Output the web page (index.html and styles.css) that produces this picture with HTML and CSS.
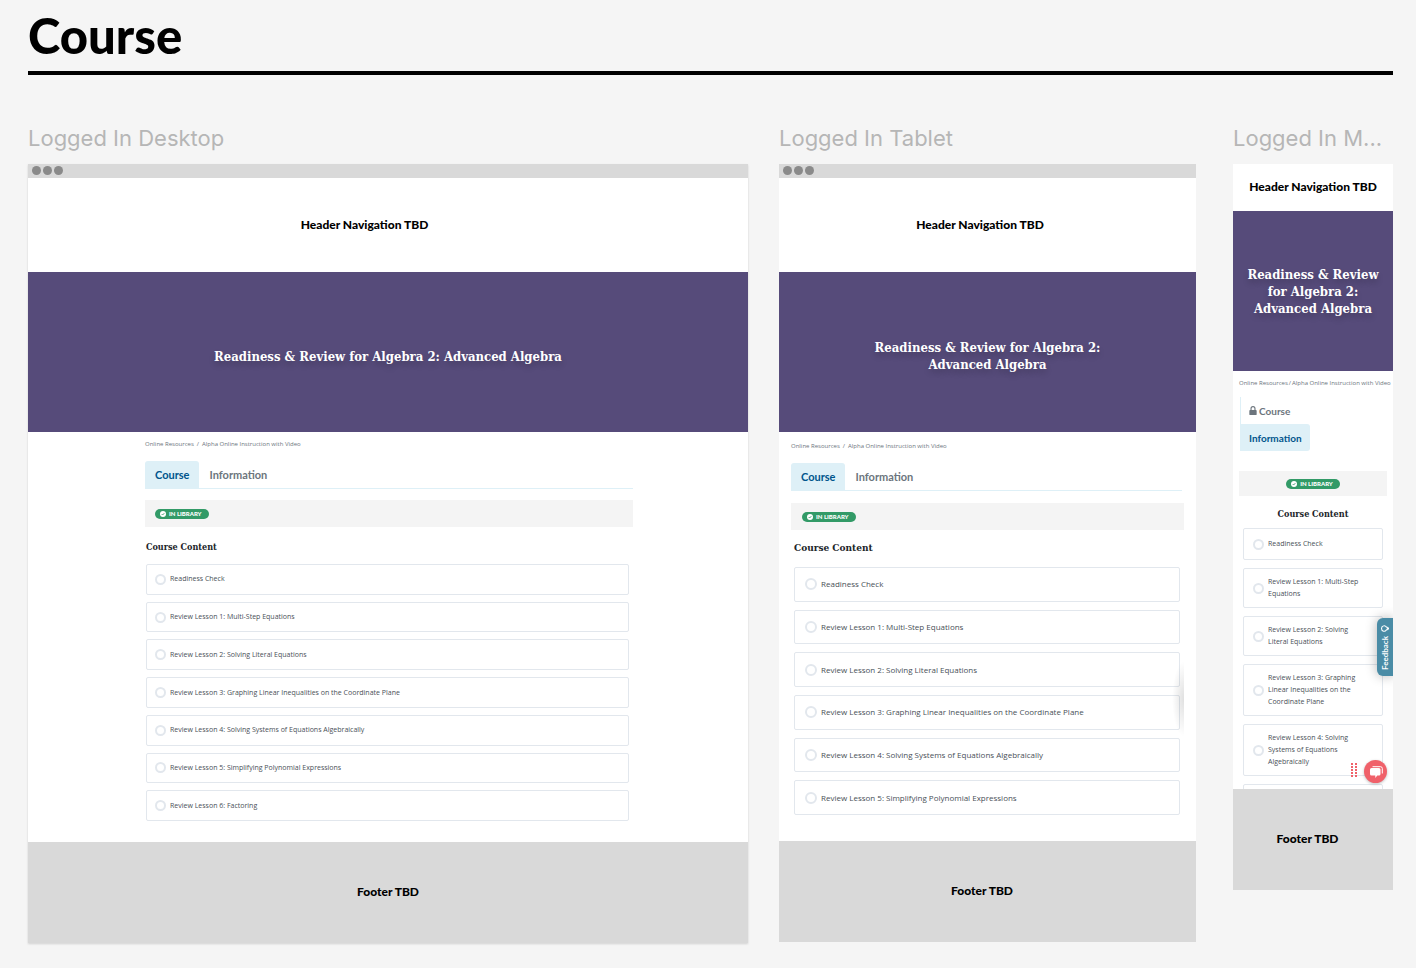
FILE: index.html
```html
<!DOCTYPE html>
<html lang="en">
  <head>
    <meta charset="UTF-8" />
    <meta name="viewport" content="width=device-width, initial-scale=1.0" />
    <title>Course</title>
    <link rel="stylesheet" href="styles.css">
  </head>
  <body>
    <svg width="0" height="0" class="defs" aria-hidden="true">
      <symbol id="check" viewBox="0 0 16 16">
        <circle cx="8" cy="8" r="8" fill="#fff" />
        <path d="M4.5 8.2l2.5 2.5 4.6-5" fill="none" stroke="#329a67" stroke-width="2.2" />
      </symbol>
    </svg>

    <h1>Course</h1>

    <main class="boards">
      <!-- Desktop -->
      <section class="board desktop">
        <h2 class="label">Logged In Desktop</h2>
        <div class="frame">
          <div class="chrome"><span></span><span></span><span></span></div>
          <header class="site-header">Header Navigation TBD</header>
          <div class="hero"><h3>Readiness &amp; Review for Algebra 2: Advanced Algebra</h3></div>
          <div class="content">
            <nav class="breadcrumb"><a href="#">Online Resources</a><span>/</span><a href="#">Alpha Online Instruction with Video</a></nav>
            <div class="tabs">
              <button type="button" class="tab active">Course</button>
              <button type="button" class="tab">Information</button>
            </div>
            <div class="status"><span class="badge"><svg><use href="#check" /></svg>IN LIBRARY</span></div>
            <h4>Course Content</h4>
            <ul class="lessons">
              <li><a href="#"><i></i>Readiness Check</a></li>
              <li><a href="#"><i></i>Review Lesson 1: Multi-Step Equations</a></li>
              <li><a href="#"><i></i>Review Lesson 2: Solving Literal Equations</a></li>
              <li><a href="#"><i></i>Review Lesson 3: Graphing Linear Inequalities on the Coordinate Plane</a></li>
              <li><a href="#"><i></i>Review Lesson 4: Solving Systems of Equations Algebraically</a></li>
              <li><a href="#"><i></i>Review Lesson 5: Simplifying Polynomial Expressions</a></li>
              <li><a href="#"><i></i>Review Lesson 6: Factoring</a></li>
            </ul>
          </div>
          <footer class="site-footer">Footer TBD</footer>
        </div>
      </section>

      <!-- Tablet -->
      <section class="board tablet">
        <h2 class="label">Logged In Tablet</h2>
        <div class="frame">
          <div class="chrome"><span></span><span></span><span></span></div>
          <header class="site-header">Header Navigation TBD</header>
          <div class="hero"><h3>Readiness &amp; Review for Algebra 2:<br />Advanced Algebra</h3></div>
          <div class="content">
            <nav class="breadcrumb"><a href="#">Online Resources</a><span>/</span><a href="#">Alpha Online Instruction with Video</a></nav>
            <div class="tabs">
              <button type="button" class="tab active">Course</button>
              <button type="button" class="tab">Information</button>
            </div>
            <div class="status"><span class="badge"><svg><use href="#check" /></svg>IN LIBRARY</span></div>
            <h4>Course Content</h4>
            <ul class="lessons">
              <li><a href="#"><i></i>Readiness Check</a></li>
              <li><a href="#"><i></i>Review Lesson 1: Multi-Step Equations</a></li>
              <li><a href="#"><i></i>Review Lesson 2: Solving Literal Equations</a></li>
              <li><a href="#"><i></i>Review Lesson 3: Graphing Linear Inequalities on the Coordinate Plane</a></li>
              <li><a href="#"><i></i>Review Lesson 4: Solving Systems of Equations Algebraically</a></li>
              <li><a href="#"><i></i>Review Lesson 5: Simplifying Polynomial Expressions</a></li>
            </ul>
            <div class="edge-shadow"></div>
          </div>
          <footer class="site-footer">Footer TBD</footer>
        </div>
      </section>

      <!-- Mobile -->
      <section class="board mobile">
        <h2 class="label">Logged In M...</h2>
        <div class="frame">
          <header class="site-header">Header Navigation TBD</header>
          <div class="hero"><h3>Readiness &amp; Review<br />for Algebra 2:<br />Advanced Algebra</h3></div>
          <div class="content">
            <nav class="breadcrumb"><a href="#">Online Resources</a><span>/</span><a href="#">Alpha Online Instruction with Video</a></nav>
            <div class="tabs">
              <button type="button" class="tab">
                <svg viewBox="0 0 14 16"><path d="M2 7h10a1.500 1.500 0 0 1 1.500 1.500v6A1.500 1.500 0 0 1 12 16H2a1.500 1.500 0 0 1-1.500-1.500v-6A1.500 1.500 0 0 1 2 7z" fill="#6c757d" /><path d="M3.500 8V4.500a3.500 3.500 0 0 1 7 0V8" fill="none" stroke="#6c757d" stroke-width="2" /></svg>Course
              </button>
              <button type="button" class="tab active">Information</button>
            </div>
            <div class="status"><span class="badge"><svg><use href="#check" /></svg>IN LIBRARY</span></div>
            <h4>Course Content</h4>
            <ul class="lessons">
              <li><a href="#"><i></i><span>Readiness Check</span></a></li>
              <li><a href="#"><i></i><span>Review Lesson 1: Multi-Step<br />Equations</span></a></li>
              <li><a href="#"><i></i><span>Review Lesson 2: Solving<br />Literal Equations</span></a></li>
              <li><a href="#"><i></i><span>Review Lesson 3: Graphing<br />Linear Inequalities on the<br />Coordinate Plane</span></a></li>
              <li><a href="#"><i></i><span>Review Lesson 4: Solving<br />Systems of Equations<br />Algebraically</span></a></li>
              <li class="cut"></li>
            </ul>
            <button type="button" class="feedback">
              Feedback
              <svg viewBox="0 0 10 10" fill="none" stroke="#fff" stroke-width="1.200"><path d="M7 3.300L8.200 3.800V6.200L7 6.700C6.200 8 5 8.300 4 8A3.100 3.100 0 0 1 4 2C5 1.700 6.200 2 7 3.300z" /><path d="M9.500 4v2" /></svg>
            </button>
            <svg class="grip" viewBox="0 0 6 14"><path d="M1 0v14M5 0v14" stroke="#f0616a" stroke-width="2" stroke-dasharray="2 1" /></svg>
            <button type="button" class="chat" aria-label="Chat">
              <svg viewBox="0 0 14 12"><path d="M3.500 .7h8A1.800 1.800 0 0 1 13.300 2.500V7.500" fill="none" stroke="#fff" stroke-width="1" /><path d="M2.500 2h7.500a1.500 1.500 0 0 1 1.500 1.500v4.500A1.500 1.500 0 0 1 10 9.500H8.300L6.300 12V9.500H2.500A1.500 1.500 0 0 1 1 8v-4.500a1.500 1.500 0 0 1 1.500-1.500z" fill="#fff" /></svg>
            </button>
          </div>
          <footer class="site-footer">Footer TBD</footer>
        </div>
      </section>
    </main>
  </body>
</html>
```
FILE: styles.css
```css
* {
  box-sizing: border-box;
}
body {
  margin: 0;
  padding: 7px 23px 24px 28px;
  background-color: #f5f5f5;
  font-family: Lato, "Open Sans", sans-serif;
  color: #000;
}
h1,
h2,
h3,
h4,
ul {
  margin: 0;
  padding: 0;
  font-weight: normal;
}
button {
  border: none;
  padding: 0;
  background: none;
  font-family: inherit;
  cursor: pointer;
}
a {
  color: inherit;
  text-decoration: none;
}
.defs {
  position: absolute;
}
h1 {
  height: 68px;
  border-bottom: 4px solid #000;
  font-size: 49px;
  line-height: 56px;
  font-weight: 900;
}

.boards {
  display: flex;
  align-items: flex-start;
  padding-top: 49px;
}
.board {
  min-width: 0;
}
.desktop {
  flex: 720 1 0;
}
.tablet {
  flex: 417 1 0;
  margin-left: 31px;
}
.mobile {
  flex: 160 1 0;
  margin-left: 37px;
}
.label {
  height: 40px;
  font-family: Inter, sans-serif;
  font-size: 22px;
  line-height: 28px;
  color: #b6b6b6;
  white-space: nowrap;
}
.frame {
  background-color: #fff;
}
.desktop .frame {
  box-shadow: 0 1px 2px rgba(0, 0, 0, 0.15);
}
.chrome {
  display: flex;
  align-items: center;
  gap: 2px;
  height: 14px;
  padding: 0 0 1px 4px;
  background-color: #d9d9d9;
}
.chrome span {
  width: 9px;
  height: 9px;
  border-radius: 50%;
  background-color: #8a8a8a;
}
.site-header,
.site-footer {
  display: flex;
  align-items: center;
  justify-content: center;
  padding-bottom: 2px;
  font-size: 12px;
  font-weight: 900;
}
.site-header {
  height: 94px;
}
.site-footer {
  height: 101px;
  background-color: #d9d9d9;
}
.desktop .site-header {
  padding-right: 47px;
}
.tablet .site-header {
  padding-right: 15px;
}
.tablet .site-footer,
.mobile .site-footer {
  padding-right: 11px;
}
.mobile .site-header {
  height: 47px;
}

.hero {
  display: flex;
  align-items: center;
  justify-content: center;
  height: 160px;
  padding-top: 8px;
  background-color: #564b7a;
  color: #fff;
  text-align: center;
}
.hero h3 {
  font-family: "DejaVu Serif Condensed", "DejaVu Serif", serif;
  font-size: 13px;
  line-height: 17px;
  font-weight: bold;
  text-shadow: 0 4px 6px rgba(0, 0, 0, 0.2);
}
.mobile .hero {
  padding-top: 0;
}

.content {
  position: relative;
}
.desktop .content {
  height: 410px;
  padding: 8px 115px 0 117px;
}
.tablet .content {
  height: 409px;
  padding: 10px 12px 0 12px;
}
.mobile .content {
  height: 418px;
  padding: 8px 6px 0 6px;
  overflow: hidden;
}
.breadcrumb {
  display: flex;
  gap: 3px;
  font-family: "Open Sans", sans-serif;
  font-size: 6px;
  line-height: 8px;
  color: #6c757d;
  white-space: nowrap;
}
.tabs {
  display: flex;
  height: 28px;
  margin-top: 13px;
  border-bottom: 1px solid #def0f7;
}
.tab {
  padding: 0 10px;
  border-radius: 3px 3px 0 0;
  font-size: 11px;
  font-weight: bold;
  color: #6c757d;
}
.tab.active {
  background-color: #def0f7;
  color: #00558c;
}
.status {
  display: flex;
  align-items: center;
  height: 27px;
  margin-top: 11px;
  padding-left: 10px;
  background-color: #f4f4f4;
}
.badge {
  display: flex;
  align-items: center;
  gap: 3px;
  height: 10px;
  padding: 0 7px 0 5px;
  border-radius: 5px;
  background-color: #329a67;
  color: #fff;
  font-size: 6px;
  font-weight: 900;
}
.badge svg {
  width: 6px;
  height: 6px;
}
h4 {
  margin-top: 13px;
  font-family: "DejaVu Serif Condensed", "DejaVu Serif", serif;
  font-size: 9px;
  line-height: 14px;
  font-weight: bold;
  color: #212529;
}
.lessons {
  display: flex;
  flex-direction: column;
  gap: 7px;
  margin-top: 10px;
  list-style: none;
}
.lessons li {
  display: flex;
  flex: 1;
  border: 1px solid #e2e7ed;
  border-radius: 2px;
}
.lessons a {
  display: flex;
  flex: 1;
  align-items: center;
  gap: 4px;
  padding-left: 8px;
  font-family: "Open Sans", sans-serif;
  font-size: 7px;
  line-height: 12px;
  color: #495057;
}
.lessons i {
  flex: none;
  width: 11px;
  height: 11px;
  border: 2px solid #e2e7ed;
  border-radius: 50%;
}

.desktop h4,
.desktop .lessons {
  margin-left: 1px;
}
.desktop .lessons {
  min-height: 257px;
  margin-right: 4px;
}
.tablet .tabs {
  margin-right: 2px;
}
.tablet .status {
  margin-top: 12px;
  padding-left: 11px;
}
.tablet h4 {
  margin-top: 11px;
  margin-left: 3px;
  font-size: 10px;
}
.tablet .lessons {
  gap: 8px;
  min-height: 248px;
  margin: 12px 4px 0 3px;
}
.tablet .lessons a {
  padding-left: 10px;
  font-size: 8px;
}
.tablet .lessons i {
  width: 12px;
  height: 12px;
}
.edge-shadow {
  position: absolute;
  right: 12px;
  bottom: 104px;
  width: 12px;
  height: 76px;
  background: radial-gradient(ellipse at right, rgba(0, 0, 0, 0.12), rgba(0, 0, 0, 0) 70%);
}

.mobile .breadcrumb {
  gap: 1px;
}
.mobile .tabs {
  flex-direction: column;
  align-items: flex-start;
  height: 54px;
  margin: 10px 0 0 1px;
  border: none;
}
.mobile .tab {
  display: flex;
  align-items: center;
  gap: 2px;
  height: 27px;
  padding: 0 8px;
  border-left: 1px solid #def0f7;
  border-radius: 0;
  font-size: 10px;
}
.mobile .tab.active {
  border-radius: 0 3px 3px 0;
}
.mobile .tab svg {
  width: 8px;
  height: 9px;
}
.mobile .status {
  justify-content: center;
  height: 25px;
  margin-top: 20px;
  padding: 0;
}
.mobile h4 {
  margin-top: 11px;
  text-align: center;
}
.mobile .lessons {
  gap: 8px;
  margin: 7px 4px 0;
}
.mobile .lessons li {
  flex: none;
  min-height: 32px;
}
.mobile .lessons a {
  padding: 7px 0 7px 9px;
}
.feedback {
  position: absolute;
  right: 0;
  top: 247px;
  display: flex;
  align-items: center;
  justify-content: center;
  gap: 4px;
  width: 16px;
  height: 58px;
  border-radius: 0 6px 6px 0;
  background-color: #4a8ca6;
  box-shadow: 0 0 12px rgba(0, 0, 0, 0.3);
  color: #fff;
  font-size: 8px;
  font-weight: bold;
  writing-mode: vertical-rl;
  transform: rotate(180deg);
}
.feedback svg {
  width: 9px;
  height: 9px;
  transform: rotate(180deg);
}
.grip {
  position: absolute;
  right: 36px;
  bottom: 12px;
  width: 6px;
  height: 14px;
}
.chat {
  position: absolute;
  right: 6px;
  bottom: 6px;
  display: flex;
  align-items: center;
  justify-content: center;
  width: 23px;
  height: 23px;
  border-radius: 50%;
  background-color: #f0616a;
  box-shadow: 0 1px 3px rgba(0, 0, 0, 0.25);
}
.chat svg {
  width: 14px;
  height: 12px;
}
```
